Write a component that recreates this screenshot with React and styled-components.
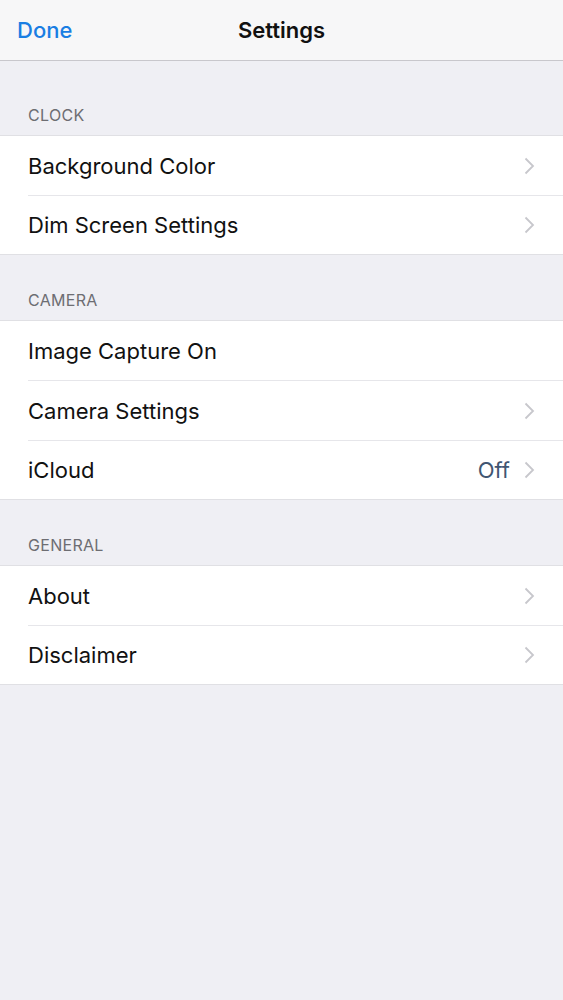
import React from "react";
import styled, { createGlobalStyle } from "styled-components";

const GlobalStyle = createGlobalStyle`
  html, body {
    margin: 0;
    padding: 0;
    background: #efeff4;
    font-family: Inter, "Noto Sans", sans-serif;
  }
`;

const sections = [
  {
    title: "CLOCK",
    rows: [
      { label: "Background Color", chevron: true },
      { label: "Dim Screen Settings", chevron: true },
    ],
  },
  {
    title: "CAMERA",
    rows: [
      { label: "Image Capture On" },
      { label: "Camera Settings", chevron: true },
      { label: "iCloud", value: "Off", chevron: true },
    ],
  },
  {
    title: "GENERAL",
    rows: [
      { label: "About", chevron: true },
      { label: "Disclaimer", chevron: true },
    ],
  },
];

function Chevron() {
  return (
    <ChevronIcon width="11" height="18" viewBox="0 0 11 18">
      <path d="M1.5 1.5 L9 9 L1.5 16.5" fill="none" stroke="#c7c7cc" strokeWidth="1.8" />
    </ChevronIcon>
  );
}

function App() {
  return (
    <Page>
      <GlobalStyle />
      <NavBar>
        <DoneButton>Done</DoneButton>
        <Title>Settings</Title>
      </NavBar>
      {sections.map((section, i) => (
        <Section key={section.title} first={i === 0}>
          <SectionHeader>{section.title}</SectionHeader>
          <Group>
            {section.rows.map((row) => (
              <Row key={row.label}>
                <Label>{row.label}</Label>
                {row.value && <Value>{row.value}</Value>}
                {row.chevron && <Chevron />}
              </Row>
            ))}
          </Group>
        </Section>
      ))}
    </Page>
  );
}

export default App;

const Page = styled.div`
  min-height: 1000px;
  background: #efeff4;
`;

const NavBar = styled.div`
  height: 61px;
  background: #f7f7f8;
  border-bottom: 1px solid #c8c7cc;
  box-sizing: border-box;
  display: flex;
  align-items: center;
  justify-content: center;
  position: relative;
`;

const DoneButton = styled.button`
  position: absolute;
  left: 17px;
  top: 50%;
  transform: translateY(-50%);
  background: none;
  border: none;
  padding: 0;
  font-family: inherit;
  font-size: 22px;
  font-weight: 500;
  color: #1a7ee3;
`;

const Title = styled.div`
  font-size: 22px;
  font-weight: 600;
  color: #111;
`;

const Section = styled.div`
  padding-top: ${(p) => (p.first ? "44px" : "35px")};
`;

const SectionHeader = styled.div`
  padding: 0 28px 10px;
  font-size: 16px;
  color: #6d6d72;
  letter-spacing: 0.3px;
`;

const Group = styled.div`
  background: #fff;
  border-top: 1px solid #e0e0e4;
  border-bottom: 1px solid #e0e0e4;
`;

const Row = styled.div`
  height: 59px;
  margin-left: 28px;
  padding-right: 28px;
  display: flex;
  align-items: center;
  border-bottom: 1px solid #e6e6ea;

  &:last-child {
    height: 58px;
    border-bottom: none;
  }
`;

const Label = styled.div`
  flex: 1;
  font-size: 22px;
  color: #111;
`;

const Value = styled.div`
  font-size: 22px;
  color: #415672;
  margin-right: 14px;
`;

const ChevronIcon = styled.svg`
  display: block;
`;
